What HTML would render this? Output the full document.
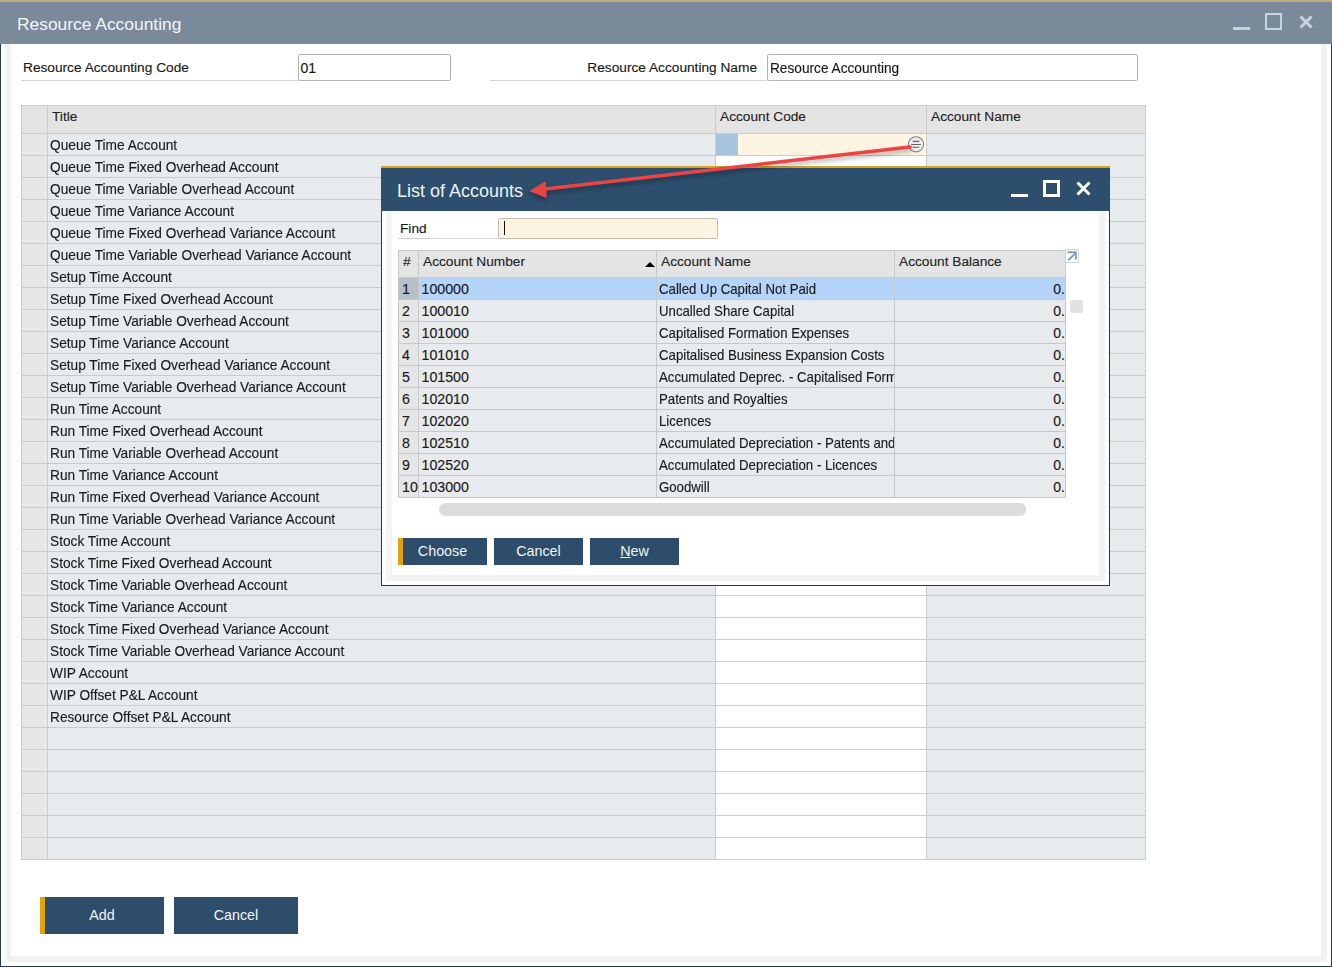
<!DOCTYPE html><html><head><meta charset="utf-8"><style>*{margin:0;padding:0;box-sizing:border-box}
body{width:1332px;height:967px;overflow:hidden;background:#fff;position:relative;font-family:"Liberation Sans",sans-serif;color:#1a1a1a}
div,svg,span{position:absolute}
.gold{left:0;top:0;width:1332px;height:2px;background:#c0ae80}
.tbar{left:0;top:2px;width:1332px;height:42px;background:#7a8a9a}
.ttl{left:17px;top:12px;font-size:17.4px;color:#f4f7fa;white-space:nowrap}
.mn{left:1233px;top:25px;width:17px;height:3px;background:#c8d3dc}
.mx{left:1265px;top:11px;width:17px;height:17px;border:2px solid #c8d3dc}
.cl{left:1299px;top:13px}
.fl{left:0;top:44px;width:1px;height:923px;background:#253b4f}
.fr{left:1331px;top:44px;width:1px;height:923px;background:#253b4f}
.fb{left:0;top:966px;width:1332px;height:1px;background:#253b4f}
.sl{left:5px;top:44px;width:6px;height:918px;background:#f1f2f2}
.sr{left:1321px;top:44px;width:6px;height:918px;background:#f1f2f2}
.sb{left:5px;top:956px;width:1322px;height:6px;background:#f1f2f2}
.uline{height:1px;background:#d4d4d4}
.lbl{font-size:13.7px;white-space:nowrap;line-height:16px;-webkit-text-stroke:0.15px #1a1a1a}
.inp{border:1px solid #b4b4b4;border-radius:2px;background:#fff}
.inp span{left:1.5px;top:5px;font-size:14.1px;line-height:16px;white-space:nowrap;-webkit-text-stroke:0.15px #1a1a1a}
.grid{left:21px;top:105px;width:1125px;height:755px;border:1px solid #c8c8c8;background:#e8ebee}
.htxt{top:109px;font-size:13.7px;line-height:16px;white-space:nowrap;color:#222;-webkit-text-stroke:0.12px #222}
.txt{transform-origin:0 0;transform:scaleX(0.952);font-size:14.4px;line-height:22px;height:22px;white-space:nowrap;padding-top:1px;-webkit-text-stroke:0.15px #1a1a1a}
.btn{background:#2d4d6b;color:#f2f5f8;font-size:14.3px;line-height:37px;text-align:center}
.dttl{left:397px;top:181px;font-size:18px;color:#eef2f6;white-space:nowrap}
.dh{top:254px;font-size:13.7px;line-height:16px;white-space:nowrap;color:#222;-webkit-text-stroke:0.12px #222}
.dr{transform-origin:0 0;transform:scaleX(0.918);font-size:14.4px;line-height:22px;height:22px;white-space:nowrap;overflow:hidden;padding-top:1px;-webkit-text-stroke:0.15px #1a1a1a}
.btn2{background:#2d4d6b;color:#f2f5f8;font-size:14.3px;line-height:27px;height:27px;text-align:center}
u{position:static;text-decoration:underline}
.num{transform:none;font-size:14.2px;padding-top:1px}
</style></head><body>
<div class="gold"></div><div class="tbar"><div class="ttl">Resource Accounting</div><div class="mn"></div><div class="mx"></div><svg class="cl" width="14" height="14" viewBox="0 0 14 14"><path d="M1.5 1.5L12.5 12.5M12.5 1.5L1.5 12.5" stroke="#c8d3dc" stroke-width="3"/></svg></div>
<div class="fl"></div><div class="fr"></div><div class="fb"></div>
<div class="sl"></div><div class="sr"></div><div class="sb"></div>
<div class="uline" style="left:21px;top:80px;width:277px;height:1px;"></div>
<div class="lbl" style="left:23px;top:60px">Resource Accounting Code</div>
<div class="inp" style="left:298px;top:54px;width:153px;height:27px"><span>01</span></div>
<div class="uline" style="left:490px;top:80px;width:277px;height:1px;"></div>
<div class="lbl" style="left:490px;top:60px;width:267px;text-align:right">Resource Accounting Name</div>
<div class="inp" style="left:767px;top:54px;width:371px;height:27px"><span style="transform:scaleX(0.97);transform-origin:0 0">Resource Accounting</span></div>
<div class="" style="left:21px;top:105px;width:1125px;height:755px;background:#e8ebee;border:1px solid #c9cbcd"></div>
<div class="" style="left:22px;top:106px;width:1123px;height:27px;background:#e4e4e4"></div>
<div class="" style="left:22px;top:134px;width:25px;height:725px;background:#e6e6e6"></div>
<div class="" style="left:716px;top:134px;width:210px;height:725px;background:#fff"></div>
<div class="" style="left:716px;top:134px;width:22px;height:21px;background:#a7c4de"></div>
<div class="" style="left:738px;top:134px;width:187px;height:21px;background:#fdf4e1"></div>
<div class="" style="left:22px;top:133px;width:1123px;height:1px;background:#c9cbcd"></div>
<div class="" style="left:22px;top:155px;width:1123px;height:1px;background:#c9cbcd"></div>
<div class="" style="left:22px;top:177px;width:1123px;height:1px;background:#c9cbcd"></div>
<div class="" style="left:22px;top:199px;width:1123px;height:1px;background:#c9cbcd"></div>
<div class="" style="left:22px;top:221px;width:1123px;height:1px;background:#c9cbcd"></div>
<div class="" style="left:22px;top:243px;width:1123px;height:1px;background:#c9cbcd"></div>
<div class="" style="left:22px;top:265px;width:1123px;height:1px;background:#c9cbcd"></div>
<div class="" style="left:22px;top:287px;width:1123px;height:1px;background:#c9cbcd"></div>
<div class="" style="left:22px;top:309px;width:1123px;height:1px;background:#c9cbcd"></div>
<div class="" style="left:22px;top:331px;width:1123px;height:1px;background:#c9cbcd"></div>
<div class="" style="left:22px;top:353px;width:1123px;height:1px;background:#c9cbcd"></div>
<div class="" style="left:22px;top:375px;width:1123px;height:1px;background:#c9cbcd"></div>
<div class="" style="left:22px;top:397px;width:1123px;height:1px;background:#c9cbcd"></div>
<div class="" style="left:22px;top:419px;width:1123px;height:1px;background:#c9cbcd"></div>
<div class="" style="left:22px;top:441px;width:1123px;height:1px;background:#c9cbcd"></div>
<div class="" style="left:22px;top:463px;width:1123px;height:1px;background:#c9cbcd"></div>
<div class="" style="left:22px;top:485px;width:1123px;height:1px;background:#c9cbcd"></div>
<div class="" style="left:22px;top:507px;width:1123px;height:1px;background:#c9cbcd"></div>
<div class="" style="left:22px;top:529px;width:1123px;height:1px;background:#c9cbcd"></div>
<div class="" style="left:22px;top:551px;width:1123px;height:1px;background:#c9cbcd"></div>
<div class="" style="left:22px;top:573px;width:1123px;height:1px;background:#c9cbcd"></div>
<div class="" style="left:22px;top:595px;width:1123px;height:1px;background:#c9cbcd"></div>
<div class="" style="left:22px;top:617px;width:1123px;height:1px;background:#c9cbcd"></div>
<div class="" style="left:22px;top:639px;width:1123px;height:1px;background:#c9cbcd"></div>
<div class="" style="left:22px;top:661px;width:1123px;height:1px;background:#c9cbcd"></div>
<div class="" style="left:22px;top:683px;width:1123px;height:1px;background:#c9cbcd"></div>
<div class="" style="left:22px;top:705px;width:1123px;height:1px;background:#c9cbcd"></div>
<div class="" style="left:22px;top:727px;width:1123px;height:1px;background:#c9cbcd"></div>
<div class="" style="left:22px;top:749px;width:1123px;height:1px;background:#c9cbcd"></div>
<div class="" style="left:22px;top:771px;width:1123px;height:1px;background:#c9cbcd"></div>
<div class="" style="left:22px;top:793px;width:1123px;height:1px;background:#c9cbcd"></div>
<div class="" style="left:22px;top:815px;width:1123px;height:1px;background:#c9cbcd"></div>
<div class="" style="left:22px;top:837px;width:1123px;height:1px;background:#c9cbcd"></div>
<div class="" style="left:47px;top:106px;width:1px;height:753px;background:#c9cbcd"></div>
<div class="" style="left:715px;top:106px;width:1px;height:753px;background:#c9cbcd"></div>
<div class="" style="left:926px;top:106px;width:1px;height:753px;background:#c9cbcd"></div>
<div class="htxt" style="left:52px">Title</div><div class="htxt" style="left:720px">Account Code</div><div class="htxt" style="left:931px">Account Name</div>
<div class="txt" style="left:50px;top:133px">Queue Time Account</div>
<div class="txt" style="left:50px;top:155px">Queue Time Fixed Overhead Account</div>
<div class="txt" style="left:50px;top:177px">Queue Time Variable Overhead Account</div>
<div class="txt" style="left:50px;top:199px">Queue Time Variance Account</div>
<div class="txt" style="left:50px;top:221px">Queue Time Fixed Overhead Variance Account</div>
<div class="txt" style="left:50px;top:243px">Queue Time Variable Overhead Variance Account</div>
<div class="txt" style="left:50px;top:265px">Setup Time Account</div>
<div class="txt" style="left:50px;top:287px">Setup Time Fixed Overhead Account</div>
<div class="txt" style="left:50px;top:309px">Setup Time Variable Overhead Account</div>
<div class="txt" style="left:50px;top:331px">Setup Time Variance Account</div>
<div class="txt" style="left:50px;top:353px">Setup Time Fixed Overhead Variance Account</div>
<div class="txt" style="left:50px;top:375px">Setup Time Variable Overhead Variance Account</div>
<div class="txt" style="left:50px;top:397px">Run Time Account</div>
<div class="txt" style="left:50px;top:419px">Run Time Fixed Overhead Account</div>
<div class="txt" style="left:50px;top:441px">Run Time Variable Overhead Account</div>
<div class="txt" style="left:50px;top:463px">Run Time Variance Account</div>
<div class="txt" style="left:50px;top:485px">Run Time Fixed Overhead Variance Account</div>
<div class="txt" style="left:50px;top:507px">Run Time Variable Overhead Variance Account</div>
<div class="txt" style="left:50px;top:529px">Stock Time Account</div>
<div class="txt" style="left:50px;top:551px">Stock Time Fixed Overhead Account</div>
<div class="txt" style="left:50px;top:573px">Stock Time Variable Overhead Account</div>
<div class="txt" style="left:50px;top:595px">Stock Time Variance Account</div>
<div class="txt" style="left:50px;top:617px">Stock Time Fixed Overhead Variance Account</div>
<div class="txt" style="left:50px;top:639px">Stock Time Variable Overhead Variance Account</div>
<div class="txt" style="left:50px;top:661px">WIP Account</div>
<div class="txt" style="left:50px;top:683px">WIP Offset P&amp;L Account</div>
<div class="txt" style="left:50px;top:705px">Resource Offset P&amp;L Account</div>
<svg style="left:907px;top:136px" width="18" height="18" viewBox="0 0 18 18"><circle cx="9" cy="8.3" r="7.6" fill="#e9ebed" stroke="#858585" stroke-width="1.1"/><path d="M5.5 5.4H12.3M4.2 8.5H13.8M5.5 11.3H12.3" stroke="#666" stroke-width="1.1"/></svg>
<div class="btn" style="left:40px;top:897px;width:124px;height:37px">Add</div><div style="left:40px;top:897px;width:5px;height:37px;background:#e1a20c"></div>
<div class="btn" style="left:174px;top:897px;width:124px;height:37px">Cancel</div>
<div class="" style="left:381px;top:166px;width:729px;height:420px;background:#fff;border:1px solid #263a4c;border-top:none"></div>
<div class="" style="left:381px;top:166px;width:729px;height:2px;background:#d8a322"></div>
<div class="" style="left:381px;top:168px;width:729px;height:43px;background:#2d4e6c"></div>
<div class="dttl">List of Accounts</div>
<div class="" style="left:1011px;top:194px;width:17px;height:3px;background:#fff"></div>
<div class="" style="left:1043px;top:180px;width:17px;height:17px;border:3px solid #fff"></div>
<svg style="left:1076px;top:181px" width="15" height="15" viewBox="0 0 15 15"><path d="M1.5 1.5L13.5 13.5M13.5 1.5L1.5 13.5" stroke="#fff" stroke-width="3"/></svg>
<div class="" style="left:386px;top:211px;width:6px;height:370px;background:#f2f3f3"></div>
<div class="" style="left:1099px;top:211px;width:6px;height:370px;background:#f2f3f3"></div>
<div class="" style="left:386px;top:575px;width:719px;height:6px;background:#f2f3f3"></div>
<div class="" style="left:392px;top:211px;width:707px;height:364px;background:#fff"></div>
<div class="lbl" style="left:400px;top:221px">Find</div>
<div class="uline" style="left:398px;top:238px;width:100px;height:1px;"></div>
<div class="" style="left:498px;top:218px;width:220px;height:21px;background:#fdf4e1;border:1px solid #c4bdad;border-radius:2px"></div>
<div class="" style="left:504px;top:221px;width:1px;height:14px;background:#111"></div>
<div class="" style="left:398px;top:250px;width:668px;height:248px;background:#e8ebee;border:1px solid #c6c9cc"></div>
<div class="" style="left:399px;top:251px;width:666px;height:26px;background:#e4e4e4"></div>
<div class="" style="left:399px;top:278px;width:19px;height:219px;background:#e6e6e6"></div>
<div class="" style="left:399px;top:278px;width:19px;height:21px;background:#b8bfc7"></div>
<div class="" style="left:419px;top:278px;width:646px;height:21px;background:#b5d4fa"></div>
<div class="" style="left:399px;top:277px;width:666px;height:1px;background:#c6c9cc"></div>
<div class="" style="left:399px;top:299px;width:666px;height:1px;background:#c6c9cc"></div>
<div class="" style="left:399px;top:321px;width:666px;height:1px;background:#c6c9cc"></div>
<div class="" style="left:399px;top:343px;width:666px;height:1px;background:#c6c9cc"></div>
<div class="" style="left:399px;top:365px;width:666px;height:1px;background:#c6c9cc"></div>
<div class="" style="left:399px;top:387px;width:666px;height:1px;background:#c6c9cc"></div>
<div class="" style="left:399px;top:409px;width:666px;height:1px;background:#c6c9cc"></div>
<div class="" style="left:399px;top:431px;width:666px;height:1px;background:#c6c9cc"></div>
<div class="" style="left:399px;top:453px;width:666px;height:1px;background:#c6c9cc"></div>
<div class="" style="left:399px;top:475px;width:666px;height:1px;background:#c6c9cc"></div>
<div class="" style="left:418px;top:251px;width:1px;height:246px;background:#c6c9cc"></div>
<div class="" style="left:656px;top:251px;width:1px;height:246px;background:#c6c9cc"></div>
<div class="" style="left:894px;top:251px;width:1px;height:246px;background:#c6c9cc"></div>
<div class="dh" style="left:403px">#</div><div class="dh" style="left:423px">Account Number</div><div class="dh" style="left:661px">Account Name</div><div class="dh" style="left:899px">Account Balance</div>
<svg style="left:644px;top:261px" width="12" height="7" viewBox="0 0 12 7"><path d="M1 6L6 1L11 6Z" fill="#000"/></svg>
<div class="dr num" style="left:402px;top:277px">1</div>
<div class="dr num" style="left:421.5px;top:277px;width:235px">100000</div>
<div class="dr" style="left:659px;top:277px;width:256px">Called Up Capital Not Paid</div>
<div class="dr num" style="left:896px;top:277px;width:169px;text-align:right;padding-right:0;font-size:14px">0.</div>
<div class="dr num" style="left:402px;top:299px">2</div>
<div class="dr num" style="left:421.5px;top:299px;width:235px">100010</div>
<div class="dr" style="left:659px;top:299px;width:256px">Uncalled Share Capital</div>
<div class="dr num" style="left:896px;top:299px;width:169px;text-align:right;padding-right:0;font-size:14px">0.</div>
<div class="dr num" style="left:402px;top:321px">3</div>
<div class="dr num" style="left:421.5px;top:321px;width:235px">101000</div>
<div class="dr" style="left:659px;top:321px;width:256px">Capitalised Formation Expenses</div>
<div class="dr num" style="left:896px;top:321px;width:169px;text-align:right;padding-right:0;font-size:14px">0.</div>
<div class="dr num" style="left:402px;top:343px">4</div>
<div class="dr num" style="left:421.5px;top:343px;width:235px">101010</div>
<div class="dr" style="left:659px;top:343px;width:256px">Capitalised Business Expansion Costs</div>
<div class="dr num" style="left:896px;top:343px;width:169px;text-align:right;padding-right:0;font-size:14px">0.</div>
<div class="dr num" style="left:402px;top:365px">5</div>
<div class="dr num" style="left:421.5px;top:365px;width:235px">101500</div>
<div class="dr" style="left:659px;top:365px;width:256px">Accumulated Deprec. - Capitalised Formation Expenses</div>
<div class="dr num" style="left:896px;top:365px;width:169px;text-align:right;padding-right:0;font-size:14px">0.</div>
<div class="dr num" style="left:402px;top:387px">6</div>
<div class="dr num" style="left:421.5px;top:387px;width:235px">102010</div>
<div class="dr" style="left:659px;top:387px;width:256px">Patents and Royalties</div>
<div class="dr num" style="left:896px;top:387px;width:169px;text-align:right;padding-right:0;font-size:14px">0.</div>
<div class="dr num" style="left:402px;top:409px">7</div>
<div class="dr num" style="left:421.5px;top:409px;width:235px">102020</div>
<div class="dr" style="left:659px;top:409px;width:256px">Licences</div>
<div class="dr num" style="left:896px;top:409px;width:169px;text-align:right;padding-right:0;font-size:14px">0.</div>
<div class="dr num" style="left:402px;top:431px">8</div>
<div class="dr num" style="left:421.5px;top:431px;width:235px">102510</div>
<div class="dr" style="left:659px;top:431px;width:256px">Accumulated Depreciation - Patents and Royalties</div>
<div class="dr num" style="left:896px;top:431px;width:169px;text-align:right;padding-right:0;font-size:14px">0.</div>
<div class="dr num" style="left:402px;top:453px">9</div>
<div class="dr num" style="left:421.5px;top:453px;width:235px">102520</div>
<div class="dr" style="left:659px;top:453px;width:256px">Accumulated Depreciation - Licences</div>
<div class="dr num" style="left:896px;top:453px;width:169px;text-align:right;padding-right:0;font-size:14px">0.</div>
<div class="dr num" style="left:402px;top:475px">10</div>
<div class="dr num" style="left:421.5px;top:475px;width:235px">103000</div>
<div class="dr" style="left:659px;top:475px;width:256px">Goodwill</div>
<div class="dr num" style="left:896px;top:475px;width:169px;text-align:right;padding-right:0;font-size:14px">0.</div>
<svg style="left:1065px;top:249px" width="14" height="14" viewBox="0 0 14 14"><rect x="0.5" y="0.5" width="13" height="13" fill="#fff" stroke="#cdd3e2"/><path d="M3.3 11.3L10.5 4.1M2.5 3.2H10.9V10.8" stroke="#8b9fc2" stroke-width="2" fill="none"/></svg>
<div class="" style="left:1070px;top:300px;width:13px;height:13px;background:#e2e2e2;border-radius:3px"></div>
<div class="" style="left:439px;top:503px;width:587px;height:13px;background:#dcdcdc;border-radius:6px"></div>
<div class="btn2" style="left:398px;top:538px;width:89px">Choose</div><div style="left:398px;top:538px;width:5px;height:27px;background:#e1a20c"></div>
<div class="btn2" style="left:494px;top:538px;width:89px">Cancel</div>
<div class="btn2" style="left:590px;top:538px;width:89px"><u>N</u>ew</div>
<svg style="left:0;top:0;filter:drop-shadow(0px 3px 2px rgba(0,0,0,0.3))" width="1332" height="967" viewBox="0 0 1332 967"><path d="M545 189L910 147" stroke="#ea4444" stroke-width="3.5" stroke-linecap="round"/><path d="M531 191L545 182.5L546 197Z" fill="#e84545" stroke="#e84545" stroke-width="1.5" stroke-linejoin="round"/></svg>
</body></html>
